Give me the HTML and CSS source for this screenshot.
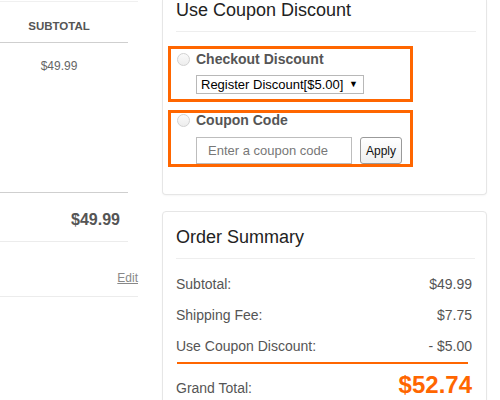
FILE: index.html
```html
<!DOCTYPE html>
<html lang="en">
<head>
  <meta charset="UTF-8">
  <meta name="viewport" content="width=device-width, initial-scale=1.0">
  <title>Checkout</title>
  <link rel="stylesheet" href="styles.css">
</head>
<body>
<div class="page">
  <div class="cart">
    <div class="cart-head"><span class="col-sub">SUBTOTAL</span></div>
    <div class="cart-item"><span class="col-sub">$49.99</span></div>
    <div class="cart-total">$49.99</div>
    <div class="cart-ship"><a href="#" class="edit">Edit</a></div>
  </div>

  <div class="side">
    <div class="card coupon">
      <h3 class="card-title">Use Coupon Discount</h3>
      <div class="coupon-body">
        <div class="option">
          <label class="option-label"><span class="radio"></span>Checkout Discount</label>
          <div class="select-wrap">
            <select id="discount">
              <option value="register">Register Discount[$5.00]</option>
            </select>
          </div>
        </div>
        <div class="option option-code">
          <label class="option-label"><span class="radio"></span>Coupon Code</label>
          <div class="code-row">
            <input type="text" id="couponCode" placeholder="Enter a coupon code">
            <button type="button">Apply</button>
          </div>
        </div>
      </div>
    </div>

    <div class="card summary">
      <h3 class="card-title">Order Summary</h3>
      <div class="summary-rows">
        <div class="row"><span>Subtotal:</span><span>$49.99</span></div>
        <div class="row"><span>Shipping Fee:</span><span>$7.75</span></div>
        <div class="row"><span>Use Coupon Discount:</span><span>- $5.00</span></div>
      </div>
      <div class="divider"></div>
      <div class="grand">
        <span>Grand Total:</span>
        <span class="grand-value">$52.74</span>
      </div>
    </div>
  </div>
</div>
</body>
</html>
```

FILE: styles.css
```css
body {
  margin: 0;
  font-family: "Liberation Sans", Arial, sans-serif;
  background: #ffffff;
  color: #555;
  overflow: hidden;
}
.page {
  display: flex;
  align-items: flex-start;
  gap: 24px;
}

/* cart table (cut off on the left) */
.cart {
  width: 138px;
  margin-top: 1px;
  border-top: 1px solid #f0f0f0;
}
.col-sub {
  display: block;
  width: 118px;
  text-align: center;
}
.cart-head {
  height: 41px;
  padding-top: 17px;
  box-sizing: border-box;
  margin-right: 10px;
  border-bottom: 1px solid #cfcfcf;
  font-size: 11.5px;
  line-height: 14px;
  font-weight: bold;
  color: #555;
}
.cart-item {
  height: 150px;
  padding-top: 16px;
  box-sizing: border-box;
  margin-right: 10px;
  border-bottom: 1px solid #cfcfcf;
  font-size: 12px;
  line-height: 14px;
  color: #666;
}
.cart-total {
  height: 49px;
  padding: 17px 8px 0 0;
  box-sizing: border-box;
  margin-right: 10px;
  border-bottom: 1px solid #ececec;
  text-align: right;
  font-size: 16px;
  line-height: 20px;
  font-weight: bold;
  color: #555;
}
.cart-ship {
  height: 55px;
  padding-top: 29px;
  box-sizing: border-box;
  border-bottom: 1px solid #ececec;
  text-align: right;
  font-size: 12px;
  line-height: 14px;
}
.edit {
  color: #888;
}

/* right side cards */
.side {
  width: 325px;
}
.card {
  background: #fff;
  border: 1px solid #e6e6e6;
  border-radius: 4px;
  box-shadow: 0 1px 2px rgba(0,0,0,0.04);
}
.card-title {
  margin: 0;
  font-size: 18px;
  line-height: 20px;
  font-weight: normal;
  color: #222;
  padding-bottom: 11px;
  border-bottom: 1px solid #eeeeee;
}

.coupon {
  border-top: 0;
  border-radius: 0 0 4px 4px;
  padding: 0 0 27px 5px;
}
.coupon-body {
  width: 245px;
}
.coupon .card-title {
  margin: 0 10px 14px 8px;
}
.option {
  border: 3px solid #ff6600;
  padding: 2px 0 5px 6px;
}
.option-label {
  display: flex;
  align-items: center;
  font-size: 14px;
  line-height: 16px;
  font-weight: bold;
  color: #555;
}
.radio {
  width: 11px;
  height: 11px;
  border: 1px solid #d2d2d2;
  border-radius: 50%;
  background: linear-gradient(#fafafa, #ededed);
  margin-right: 6px;
}
.select-wrap {
  position: relative;
  width: 168px;
  margin: 8px 0 0 19px;
}
.select-wrap::after {
  content: "\25BC";
  position: absolute;
  right: 6px;
  top: 4px;
  font-size: 9px;
  color: #000;
  pointer-events: none;
}
.select-wrap select {
  appearance: none;
  width: 100%;
  height: 19px;
  padding: 0 0 0 4px;
  border: 1px solid #b8b8b8;
  border-radius: 0;
  background: #fff;
  font-family: inherit;
  font-size: 13px;
  color: #000;
}
.option-code {
  margin-top: 8px;
  padding: 0 0 0 6px;
}
.option-code .option-label {
  line-height: 14px;
}
.code-row {
  display: flex;
  align-items: center;
  margin: 10px 0 0 19px;
}
.code-row input {
  width: 156px;
  height: 27px;
  box-sizing: border-box;
  padding: 0 11px;
  border: 1px solid #bdbdbd;
  font-family: inherit;
  font-size: 13px;
  color: #333;
}
.code-row input::placeholder {
  color: #777;
}
.code-row button {
  width: 42px;
  height: 27px;
  margin-left: 8px;
  padding: 0;
  border: 1px solid #9a9a9a;
  border-radius: 3px;
  background: linear-gradient(#ffffff, #efefef);
  font-family: inherit;
  font-size: 12px;
  color: #111;
  cursor: pointer;
}

.summary {
  margin-top: 16px;
  padding: 15px 11px 20px 13px;
}
.summary-rows {
  margin-top: 10px;
  padding-right: 3px;
}
.row {
  display: flex;
  justify-content: space-between;
  font-size: 14px;
  line-height: 31px;
  color: #555;
}
.divider {
  height: 2px;
  margin: 0 7px 0 1px;
  background: #ff6600;
}
.grand {
  display: flex;
  justify-content: space-between;
  align-items: baseline;
  margin-top: 6px;
  padding-right: 3px;
  font-size: 14px;
  line-height: 30px;
  color: #555;
}
.grand-value {
  font-size: 24px;
  font-weight: bold;
  color: #ff6600;
}
```
